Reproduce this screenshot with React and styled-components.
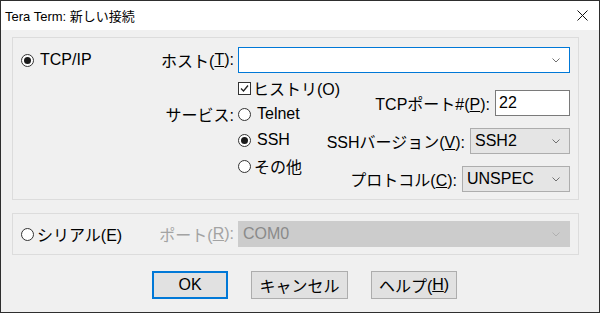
import styled, { createGlobalStyle } from "styled-components";

const GlobalStyle = createGlobalStyle`
  html, body {
    margin: 0;
    padding: 0;
    background: #f0f0f0;
  }
  body {
    font-family: "Liberation Sans", "Noto Sans CJK JP", sans-serif;
    font-size: 16px;
    color: #000;
  }
`;

const Window = styled.div`
  width: 600px;
  height: 313px;
  box-sizing: border-box;
  border: 1px solid #2e2e2e;
  background: #f0f0f0;
  display: flex;
  flex-direction: column;
`;

const TitleBar = styled.div`
  height: 29px;
  background: #fff;
  display: flex;
  align-items: center;
  justify-content: space-between;
  padding: 0 11px 0 4px;
  font-size: 13px;
`;

const Body = styled.div`
  flex: 1;
  display: flex;
  flex-direction: column;
  padding: 7px 20px 0 11px;
`;

const Group = styled.div`
  box-sizing: border-box;
  height: ${(p) => p.$height}px;
  border: 1px solid #dcdcdc;
  margin-top: ${(p) => p.$top || 0}px;
  padding: ${(p) => p.$padTop}px 8px 0 8px;
  display: grid;
  grid-template-columns: 129px 88px minmax(0, 1fr);
  grid-auto-rows: min-content;
  align-items: start;
`;

const Cell = styled.div`
  height: 26px;
  display: flex;
  align-items: center;
`;

const Label = styled.div`
  height: 26px;
  margin-top: ${(p) => p.$top || 0}px;
  display: flex;
  align-items: center;
  justify-content: flex-end;
  padding-right: 4px;
  white-space: nowrap;
  color: ${(p) => (p.$disabled ? "#a3a3a3" : "#000")};
`;

const Option = styled.div`
  height: 26px;
  display: flex;
  align-items: center;
  gap: ${(p) => p.$gap ?? 6}px;
  white-space: nowrap;
`;

const RadioMark = styled.span`
  box-sizing: border-box;
  width: 13px;
  height: 13px;
  border-radius: 50%;
  border: 1px solid #333;
  background: #fff;
  display: inline-flex;
  align-items: center;
  justify-content: center;
  flex: none;

  &::after {
    content: "";
    width: 7px;
    height: 7px;
    border-radius: 50%;
    background: ${(p) => (p.$checked ? "#1a1a1a" : "transparent")};
  }
`;

const CheckMark = styled.span`
  box-sizing: border-box;
  width: 13px;
  height: 13px;
  border: 1px solid #333;
  background: #fff;
  display: inline-flex;
  align-items: center;
  justify-content: center;
  flex: none;
`;

const Combo = styled.div`
  box-sizing: border-box;
  width: ${(p) => (p.$width ? `${p.$width}px` : "100%")};
  height: 26px;
  display: flex;
  align-items: center;
  justify-content: space-between;
  padding: 0 9px 0 4px;
  border: 1px solid ${(p) => p.$border};
  background: ${(p) => p.$bg};
  color: ${(p) => p.$color || "#000"};
`;

const TextBox = styled.div`
  box-sizing: border-box;
  width: ${(p) => p.$width}px;
  height: 26px;
  display: flex;
  align-items: center;
  padding-left: 3px;
  border: 1px solid #7a7a7a;
  background: #fff;
`;

const ServiceArea = styled.div`
  margin-top: 2px;
  display: grid;

  & > * {
    grid-area: 1 / 1;
  }
`;

const OptionList = styled.div`
  justify-self: start;
  display: flex;
  flex-direction: column;
`;

const FieldList = styled.div`
  justify-self: end;
  display: flex;
  flex-direction: column;
  align-items: flex-end;
  padding-top: 15px;
  gap: 12px;
`;

const Field = styled.div`
  display: flex;
  align-items: center;
  gap: 5px;
  white-space: nowrap;
`;

const ButtonRow = styled.div`
  margin-top: 16px;
  padding-left: 140px;
  display: flex;
  gap: 23px;
`;

const Button = styled.div`
  box-sizing: border-box;
  width: ${(p) => p.$width}px;
  height: 28px;
  display: flex;
  align-items: center;
  justify-content: center;
  background: #e1e1e1;
  border: ${(p) => (p.$default ? "2px solid #0078d7" : "1px solid #adadad")};
`;

const Chevron = ({ color = "#707070" }) => (
  <svg width="8" height="5" viewBox="0 0 8 5">
    <polyline points="0.5,0.5 4,4 7.5,0.5" fill="none" stroke={color} strokeWidth="1" />
  </svg>
);

const CloseIcon = () => (
  <svg width="11" height="11" viewBox="0 0 11 11">
    <line x1="0.5" y1="0.5" x2="10.5" y2="10.5" stroke="#111" strokeWidth="1" />
    <line x1="10.5" y1="0.5" x2="0.5" y2="10.5" stroke="#111" strokeWidth="1" />
  </svg>
);

const Radio = ({ checked, children, gap }) => (
  <Option $gap={gap}>
    <RadioMark $checked={checked} />
    <span>{children}</span>
  </Option>
);

export default function App() {
  return (
    <>
      <GlobalStyle />
      <Window>
        <TitleBar>
          <span>Tera Term: 新しい接続</span>
          <CloseIcon />
        </TitleBar>
        <Body>
          <Group $height={163} $padTop={9}>
            <Cell>
              <Radio checked gap={6}>TCP/IP</Radio>
            </Cell>
            <Label>
              ホスト(<u>T</u>):
            </Label>
            <Combo $border="#0078d7" $bg="#fff">
              <span />
              <Chevron />
            </Combo>

            <div />
            <Label $top={28}>サービス:</Label>
            <ServiceArea>
              <OptionList>
                <Option $gap={2}>
                  <CheckMark>
                    <svg width="11" height="11" viewBox="0 0 11 11">
                      <polyline points="2,5.5 4.5,8 9,2.5" fill="none" stroke="#222" strokeWidth="1.3" />
                    </svg>
                  </CheckMark>
                  <span>ヒストリ(O)</span>
                </Option>
                <Radio>Telnet</Radio>
                <Radio checked>SSH</Radio>
                <Radio gap={3}>その他</Radio>
              </OptionList>
              <FieldList>
                <Field>
                  <span>
                    TCPポート#(<u>P</u>):
                  </span>
                  <TextBox $width={75}>22</TextBox>
                </Field>
                <Field>
                  <span>
                    SSHバージョン(<u>V</u>):
                  </span>
                  <Combo $width={100} $border="#adadad" $bg="#e5e5e5">
                    <span>SSH2</span>
                    <Chevron />
                  </Combo>
                </Field>
                <Field>
                  <span>
                    プロトコル(<u>C</u>):
                  </span>
                  <Combo $width={108} $border="#adadad" $bg="#e5e5e5">
                    <span>UNSPEC</span>
                    <Chevron />
                  </Combo>
                </Field>
              </FieldList>
            </ServiceArea>
          </Group>

          <Group $height={42} $top={13} $padTop={7}>
            <Cell>
              <Radio gap={3}>シリアル(E)</Radio>
            </Cell>
            <Label $disabled>
              ポート(<u>R</u>):
            </Label>
            <Combo $border="#cccccc" $bg="#cccccc" $color="#8a8a8a">
              <span>COM0</span>
              <Chevron color="#b0b0b0" />
            </Combo>
          </Group>

          <ButtonRow>
            <Button $width={76} $default>
              OK
            </Button>
            <Button $width={97}>キャンセル</Button>
            <Button $width={86}>
              ヘルプ(<u>H</u>)
            </Button>
          </ButtonRow>
        </Body>
      </Window>
    </>
  );
}
